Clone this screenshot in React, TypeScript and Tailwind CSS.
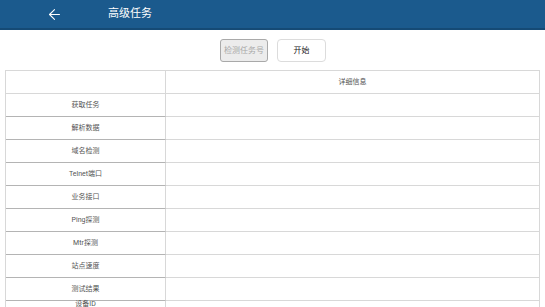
import { ArrowLeft } from 'lucide-react';

const rows = [
  '获取任务',
  '解析数据',
  '域名检测',
  'Telnet端口',
  '业务接口',
  'Ping探测',
  'Mtr探测',
  '站点速度',
  '测试结果',
];

export default function App() {
  return (
    <div
      className="w-[545px] h-[307px] overflow-hidden bg-white text-[#555]"
      style={{ fontFamily: 'Roboto, "Noto Sans CJK SC", sans-serif' }}
    >
      {/* HEADER */}
      <div className="h-[30px] bg-[#1b5a8d] border-b-2 border-[#154a75] flex items-center">
        <ArrowLeft className="ml-[46px] w-[17px] h-[17px] text-white" strokeWidth={1.5} />
        <span className="ml-[45px] text-[11px] text-white">高级任务</span>
      </div>

      {/* ACTIONS */}
      <div className="flex justify-center gap-[9px] pt-[9px] pl-[1px]">
        <button className="w-[48px] h-[23px] rounded-[3px] border border-[#a9a9a9] bg-[#ececec] text-[8px] text-[#a8a8a8]">
          检测任务号
        </button>
        <button className="w-[49px] h-[23px] rounded-[4px] border border-[#dcdcdc] bg-white text-[8px] text-[#222]">
          开始
        </button>
      </div>

      {/* TABLE */}
      <div className="mt-[8px] ml-[5px] w-[535px] border-l border-t border-r border-[#d8d8d8] text-[7px]">
        <div className="flex h-[23px] border-b border-[#d8d8d8]">
          <div className="w-[160px] border-r border-[#d8d8d8]" />
          <div className="flex-1 flex items-center justify-center">详细信息</div>
        </div>
        {rows.map((name) => (
          <div key={name} className="flex h-[23px]">
            <div className="w-[160px] border-r border-[#d8d8d8] border-b border-b-[#b4b4b4] flex items-center justify-center">
              {name}
            </div>
            <div className="flex-1 border-b border-[#d8d8d8]" />
          </div>
        ))}
        <div className="flex h-[23px]">
          <div className="w-[160px] border-r border-[#d8d8d8] flex justify-center leading-[7px]">
            设备ID
          </div>
          <div className="flex-1" />
        </div>
      </div>
    </div>
  );
}
